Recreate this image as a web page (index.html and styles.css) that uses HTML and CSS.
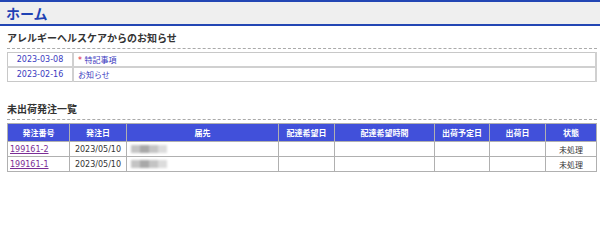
FILE: index.html
```html
<!DOCTYPE html>
<html lang="ja">

<head>
  <meta charset="utf-8">
  <title>ホーム</title>
  <link rel="stylesheet" href="styles.css">
</head>

<body>
  <div id="page-title">ホーム</div>

  <div class="section">
    <h2 class="section-title">アレルギーヘルスケアからのお知らせ</h2>
    <table class="news">
      <tr>
        <td class="news-date">2023-03-08</td>
        <td class="news-text"><span class="mark">*</span> 特記事項</td>
      </tr>
      <tr>
        <td class="news-date">2023-02-16</td>
        <td class="news-text">お知らせ</td>
      </tr>
    </table>
  </div>

  <div class="section orders-section">
    <h2 class="section-title">未出荷発注一覧</h2>
    <table class="orders">
      <tr>
        <th class="col-no">発注番号</th>
        <th class="col-date">発注日</th>
        <th class="col-dest">届先</th>
        <th class="col-wish">配達希望日</th>
        <th class="col-time">配達希望時間</th>
        <th class="col-plan">出荷予定日</th>
        <th class="col-ship">出荷日</th>
        <th>状態</th>
      </tr>
      <tr>
        <td><a href="#">199161-2</a></td>
        <td class="center">2023/05/10</td>
        <td><span class="masked"><i></i><i class="dark"></i><i></i><i class="light"></i></span></td>
        <td></td>
        <td></td>
        <td></td>
        <td></td>
        <td class="center">未処理</td>
      </tr>
      <tr>
        <td><a href="#">199161-1</a></td>
        <td class="center">2023/05/10</td>
        <td><span class="masked"><i></i><i class="dark"></i><i></i><i class="light"></i></span></td>
        <td></td>
        <td></td>
        <td></td>
        <td></td>
        <td class="center">未処理</td>
      </tr>
    </table>
  </div>
</body>

</html>
```

FILE: styles.css
```css
body,
html {
  margin: 0;
  padding: 0;
  background: white;
  font-family: "DejaVu Sans", "Noto Sans CJK JP", sans-serif;
  color: #333;
}

#page-title {
  background-color: #efefef;
  border-top: 2px solid #2346b4;
  border-bottom: 2px solid #2346b4;
  color: #1f42b4;
  font-family: "Noto Sans CJK JP", sans-serif;
  font-weight: bold;
  font-size: 14px;
  line-height: 22px;
  height: 22px;
  padding-left: 6px;
}

.section {
  margin: 0 3px 0 7px;
}

.section-title {
  margin: 0;
  padding-top: 6px;
  font-size: 10px;
  line-height: 14px;
  font-weight: bold;
  color: #333;
  border-bottom: 1px dashed #aaa;
  padding-bottom: 2px;
}

.news {
  margin-top: 3px;
  width: 100%;
  border-collapse: collapse;
  border: 1px solid #c8c8c8;
  font-size: 8px;
}

.news td {
  height: 13px;
  padding: 0 4px;
  border-right: 2px solid #d0d0d0;
  color: #3a3ac0;
}

.news tr:first-child td {
  border-bottom: 2px solid #d0d0d0;
}

.news-date {
  width: 56px;
  text-align: center;
}

.mark {
  color: #e0203c;
}

.orders-section {
  padding-top: 15px;
}

.orders {
  margin-top: 3px;
  width: 100%;
  border-collapse: collapse;
  font-size: 8px;
}

.orders th,
.orders td {
  border: 1px solid #b0b0b0;
}

.orders th {
  background-color: #4150da;
  color: white;
  font-weight: bold;
  height: 17px;
  padding: 0;
}

.orders td {
  height: 14px;
  padding: 0 2px;
  color: #333;
}

.orders a {
  color: #7b2d95;
}

.center {
  text-align: center;
}

.col-no { width: 61px; }
.col-date { width: 56px; }
.col-dest { width: 151px; }
.col-wish { width: 55px; }
.col-time { width: 99px; }
.col-plan { width: 54px; }
.col-ship { width: 55px; }

.masked {
  display: inline-flex;
  vertical-align: middle;
  filter: blur(1px);
  margin-left: 2px;
}

.masked i {
  display: block;
  width: 9px;
  height: 8px;
  background: #c4c4c4;
}

.masked i.dark {
  background: #a8a8a8;
}

.masked i.light {
  background: #dcdcdc;
}
```
